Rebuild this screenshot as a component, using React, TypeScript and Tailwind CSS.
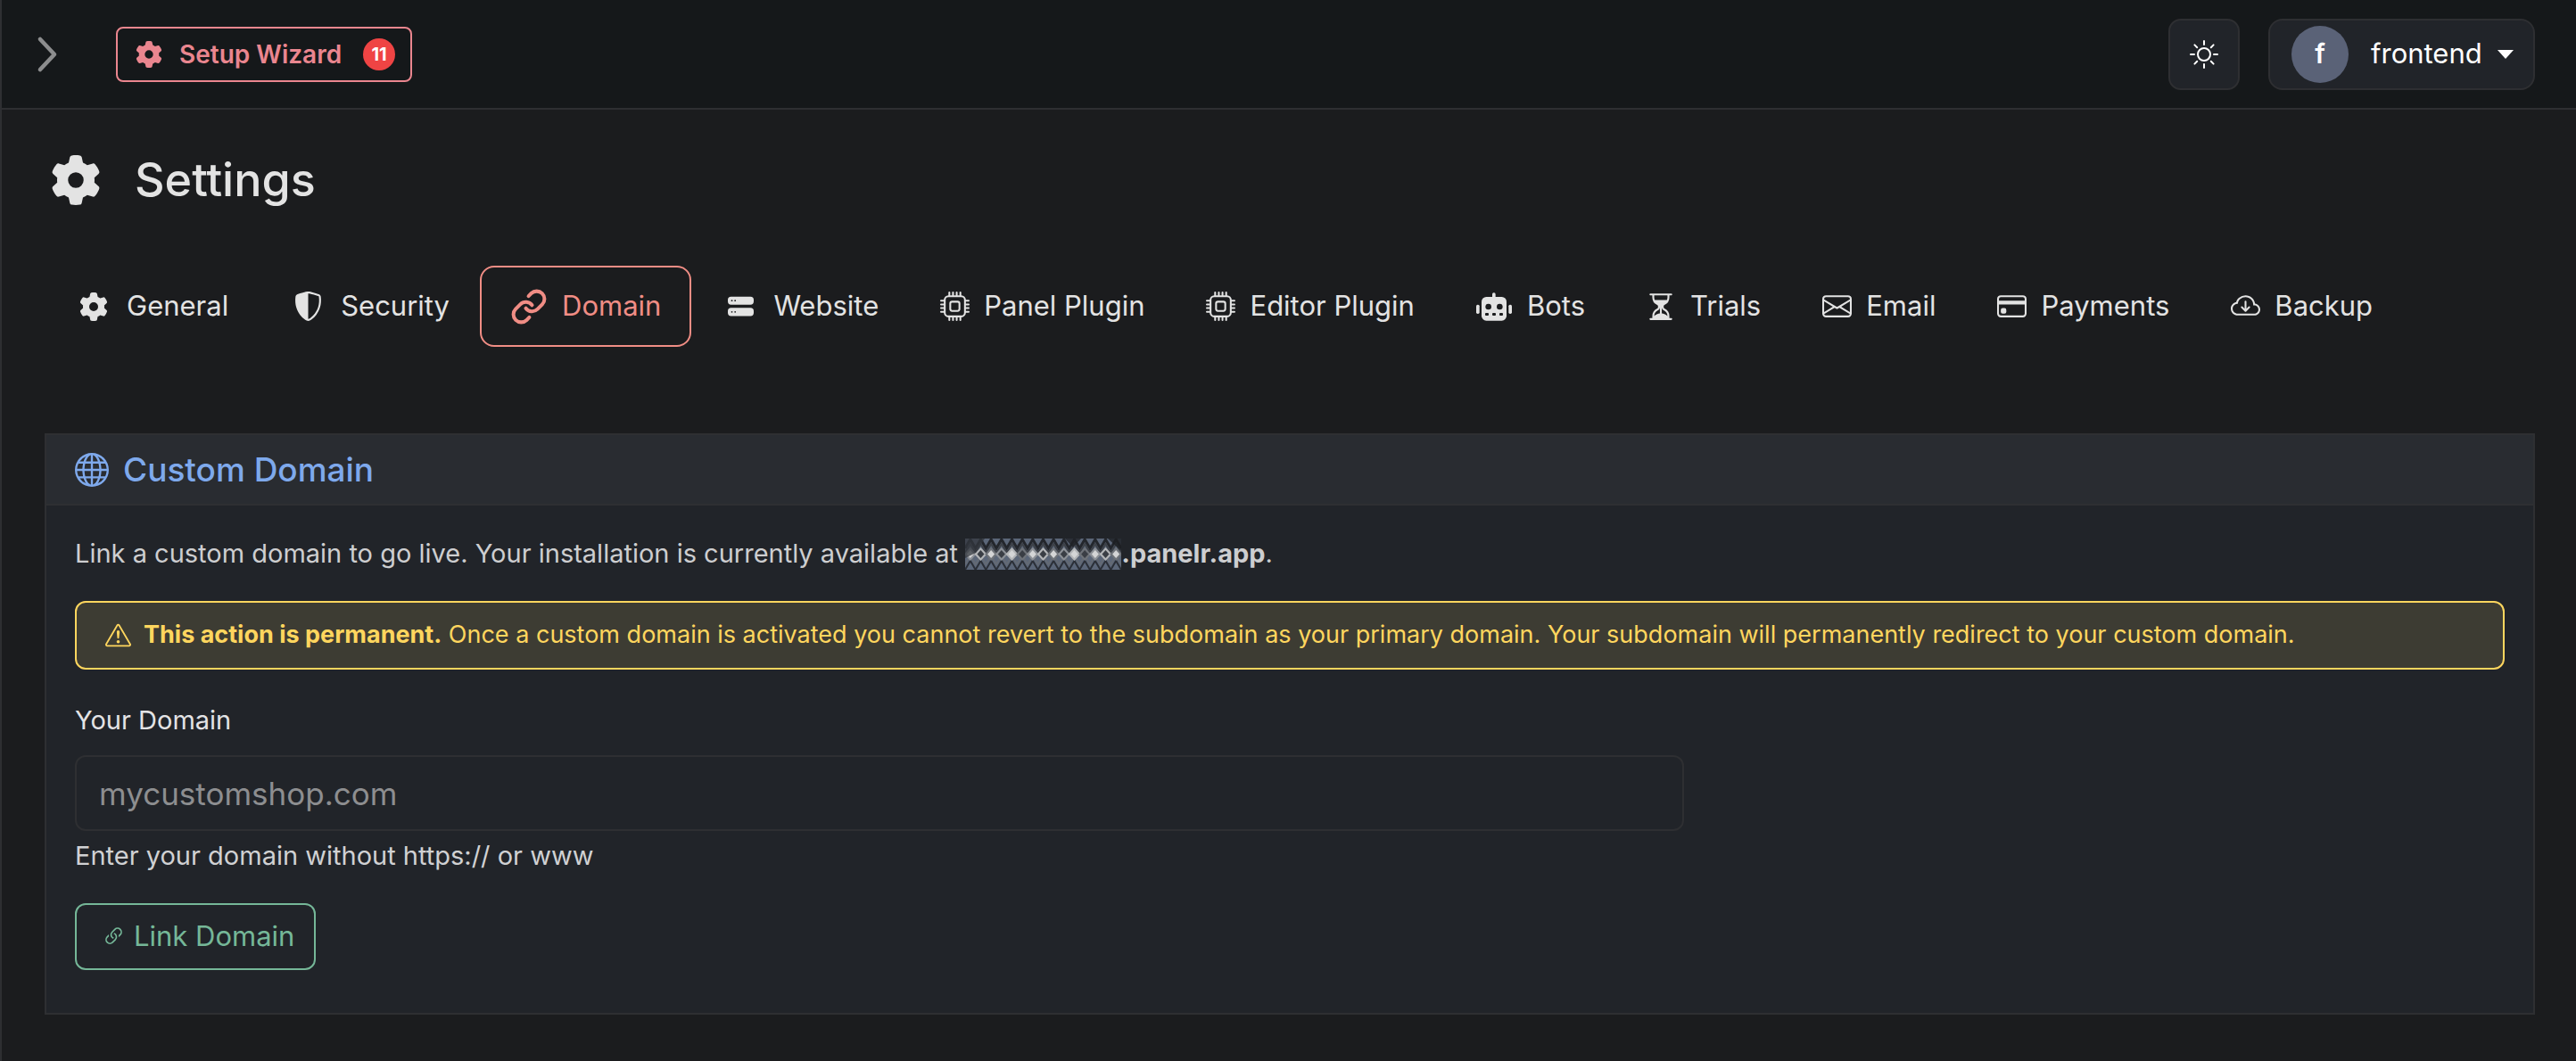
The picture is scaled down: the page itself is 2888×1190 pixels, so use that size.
import React from "react";
import { FaGear } from "react-icons/fa6";
import {
  BsShieldShaded,
  BsHddStackFill,
  BsCpu,
  BsHourglassSplit,
  BsEnvelope,
  BsCreditCard,
  BsCloudArrowDown,
  BsGlobe,
  BsExclamationTriangle,
  BsSun,
  BsLink45Deg,
} from "react-icons/bs";
import { Link as LinkIcon } from "lucide-react";

function Robot() {
  return (
    <svg width="40" height="32" viewBox="36 34 120 94" aria-hidden="true">
      <rect x="90" y="34" width="11" height="20" rx="5" fill="#e3e3e3" />
      <rect x="36" y="74" width="11" height="31" rx="5" fill="#e3e3e3" />
      <rect x="145" y="74" width="11" height="31" rx="5" fill="#e3e3e3" />
      <rect x="54" y="48" width="84" height="80" rx="16" fill="#e3e3e3" />
      <circle cx="77" cy="81" r="10" fill="#1b1c1e" />
      <circle cx="115" cy="81" r="10" fill="#1b1c1e" />
      <rect x="66" y="102" width="12" height="9" rx="3" fill="#1b1c1e" />
      <rect x="90" y="102" width="12" height="9" rx="3" fill="#1b1c1e" />
      <rect x="114" y="102" width="12" height="9" rx="3" fill="#1b1c1e" />
    </svg>
  );
}

function Redacted() {
  const cols = Array.from({ length: 15 }, (_, i) => i);
  const w = 175;
  const h = 35;
  const zig = (y: number, amp: number) => {
    const pts: string[] = [];
    for (let i = 0; i <= 30; i++) {
      pts.push(`${(i * w) / 30},${y + (i % 2 === 0 ? amp : -amp)}`);
    }
    return pts.join(" ");
  };
  return (
    <svg width={w} height={h} viewBox={`0 0 ${w} ${h}`} className="inline-block align-middle -mt-[3px]" aria-hidden="true">
      <rect width={w} height={h} fill="#5b6678" />
      <polyline points={zig(6, 5)} fill="none" stroke="#23262c" strokeWidth="3" />
      <polyline points={zig(11, 5)} fill="none" stroke="#3d4148" strokeWidth="2" />
      <polyline points={zig(30, 5)} fill="none" stroke="#2b2f37" strokeWidth="2" />
      <polyline points={zig(24, 5)} fill="none" stroke="#646a74" strokeWidth="2" />
      {cols.map((i) => (
        <path
          key={i}
          d={`M${i * 11.67 + 5.8} 10l7 7.5-7 7.5-7-7.5z`}
          fill={i % 3 === 0 ? "#8d9197" : i % 3 === 1 ? "#b4b6b8" : "#6f7379"}
        />
      ))}
      {cols.map((i) => (
        <path
          key={`c${i}`}
          d={`M${i * 11.67 + 5.8} 13l4 4.5-4 4.5-4-4.5z`}
          fill={i % 2 === 0 ? "#d4d5d6" : "#3a3e45"}
        />
      ))}
      <path d="M0 0h22l-10 16-12 6z" fill="#33373e" opacity="0.75" />
      <path d="M112 0h18l-9 10z" fill="#1f2227" opacity="0.8" />
      <path d="M160 0h15v14z" fill="#1c1e22" opacity="0.8" />
    </svg>
  );
}

type Tab = { label: string; icon: React.ReactNode; wide?: boolean; active?: boolean };

const tabs: Tab[] = [
  { label: "General", icon: <FaGear size={32} />, wide: true },
  { label: "Security", icon: <BsShieldShaded size={33} />, wide: true },
  { label: "Domain", icon: <LinkIcon size={42} strokeWidth={2.3} />, wide: true, active: true },
  { label: "Website", icon: <BsHddStackFill size={29} />, wide: true },
  { label: "Panel Plugin", icon: <BsCpu size={33} /> },
  { label: "Editor Plugin", icon: <BsCpu size={33} /> },
  { label: "Bots", icon: <Robot />, wide: true },
  { label: "Trials", icon: <BsHourglassSplit size={34} /> },
  { label: "Email", icon: <BsEnvelope size={33} /> },
  { label: "Payments", icon: <BsCreditCard size={33} /> },
  { label: "Backup", icon: <BsCloudArrowDown size={33} /> },
];

export default function App() {
  return (
    <div className="h-[1190px] w-full overflow-hidden border-l-2 border-[#2e2f32] bg-[#1b1c1e] font-['Inter',sans-serif] text-[#e3e3e3]">
      <header className="flex h-[123px] items-center border-b-2 border-[#2e2f32] bg-[#15181a] pr-[46px]">
        <svg width="24" height="42" viewBox="0 0 24 42" className="ml-[39px] text-[#8c8d8e]" aria-hidden="true">
          <path d="M4 4l16 17L4 38" fill="none" stroke="currentColor" strokeWidth="4.6" strokeLinecap="round" strokeLinejoin="round" />
        </svg>
        <button className="ml-[65px] flex h-[62px] w-[332px] items-center rounded-[8px] border-2 border-[#ea868f] pl-[20px] text-[#ea868f]">
          <FaGear size={30} />
          <span className="ml-[19px] text-[28px] font-semibold">Setup Wizard</span>
          <span className="ml-[24px] flex h-[36px] w-[36px] items-center justify-center rounded-full bg-[#ef4444] text-[20px] font-bold text-white">11</span>
        </button>
        <div className="ml-auto flex items-center gap-[32px]">
          <button className="flex h-[80px] w-[80px] items-center justify-center rounded-[14px] border-2 border-[#2e2f32] bg-[#212429] text-white">
            <BsSun size={32} />
          </button>
          <button className="flex h-[80px] w-[299px] items-center rounded-[16px] border-2 border-[#2e2f32] bg-[#212429] pl-[24px] text-white">
            <span className="flex h-[64px] w-[64px] items-center justify-center rounded-full bg-[#5a6277] text-[30px] font-semibold">f</span>
            <span className="ml-[25px] text-[31px]">frontend</span>
            <span className="ml-[17px] h-0 w-0 border-x-[9px] border-t-[10px] border-x-transparent border-t-white" />
          </button>
        </div>
      </header>

      <main className="pl-[48px] pr-[46px] pt-[50px]">
        <div className="flex h-[58px] items-center pl-[7px]">
          <FaGear size={56} className="text-[#e3e3e3]" />
          <h1 className="ml-[38px] text-[52px] font-medium">Settings</h1>
        </div>

        <nav className="mt-[67px] flex">
          {tabs.map((t) => (
            <a
              key={t.label}
              className={
                t.active
                  ? "flex h-[91px] items-center rounded-[16px] border-2 border-[#f08d85] px-[32px] text-[31px] text-[#f08d85]"
                  : "flex h-[91px] items-center rounded-[16px] border-2 border-transparent px-[32px] text-[31px] text-[#e3e3e3]"
              }
            >
              <span className={t.wide ? "mr-[16px] flex w-[42px] justify-center" : "mr-[16px] flex w-[34px] justify-center"}>{t.icon}</span>
              {t.label}
            </a>
          ))}
        </nav>

        <section className="mt-[97px] h-[652px] border-2 border-[#2e2f32] bg-[#212429]">
          <div className="flex h-[79px] items-center border-b-2 border-[#2e2f32] bg-[#292c31] pl-[32px] text-[#7ea9ec]">
            <BsGlobe size={38} />
            <h2 className="ml-[16px] text-[37px] font-medium">Custom Domain</h2>
          </div>
          <div className="px-[32px]">
            <p className="mt-[34px] text-[29px] leading-[40px] text-[#cdced0]">
              Link a custom domain to go live. Your installation is currently available at <Redacted /><strong className="font-bold">.panelr.app</strong>.
            </p>
            <div className="mt-[33px] flex h-[77px] items-center rounded-[12px] border-2 border-[#ffd65e] bg-[#3d3c33] pl-[32px] text-[27px] text-[#ffd65e]">
              <BsExclamationTriangle size={29} className="shrink-0" />
              <span className="ml-[14px]"><strong className="font-bold">This action is permanent.</strong> Once a custom domain is activated you cannot revert to the subdomain as your primary domain. Your subdomain will permanently redirect to your custom domain.</span>
            </div>
            <label className="mt-[37px] block text-[29px] leading-[40px] text-[#e3e3e5]">Your Domain</label>
            <input
              placeholder="mycustomshop.com"
              className="mt-[19px] block h-[85px] w-[1804px] rounded-[12px] border-2 border-[#2e2f32] bg-[#212429] px-[25px] text-[35px] outline-none placeholder:text-[#8d8e90]"
            />
            <p className="mt-[8px] text-[29px] leading-[40px] text-[#d0d1d3]">Enter your domain without https:// or www</p>
            <button className="mt-[33px] flex h-[75px] w-[270px] items-center rounded-[12px] border-2 border-[#75b798] pl-[28px] text-[31px] text-[#75b798]">
              <BsLink45Deg size={27} />
              <span className="ml-[9px]">Link Domain</span>
            </button>
          </div>
        </section>
      </main>
    </div>
  );
}
